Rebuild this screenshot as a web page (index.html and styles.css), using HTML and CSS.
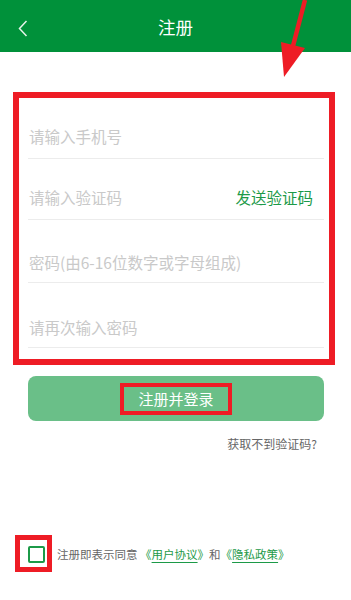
FILE: index.html
```html
<!DOCTYPE html>
<html lang="zh-CN">
<head>
<meta charset="utf-8">
<title>注册</title>
<link rel="stylesheet" href="styles.css">
</head>
<body>
<div class="page">
  <header class="topbar">
    <svg class="back" width="10" height="17" viewBox="0 0 10 17"><path d="M8.5 1 L1.5 8.5 L8.5 16" fill="none" stroke="#e6f4ea" stroke-width="1.5"/></svg>
    <h1 class="title">注册</h1>
  </header>

  <svg class="arrow" width="40" height="80" viewBox="270 0 40 80">
    <line x1="305" y1="0" x2="293" y2="46" stroke="#ee1c25" stroke-width="4.5"/>
    <polygon points="281,42 305,48 284,77" fill="#ee1c25"/>
  </svg>

  <main class="content">
    <div class="form-box">
      <div class="row row-1"><span class="ph">请输入手机号</span></div>
      <div class="row row-2"><span class="ph">请输入验证码</span><span class="send">发送验证码</span></div>
      <div class="row row-3"><span class="ph">密码(由6-16位数字或字母组成)</span></div>
      <div class="row row-4"><span class="ph">请再次输入密码</span></div>
    </div>

    <div class="submit"><span class="submit-label">注册并登录</span></div>

    <div class="help">获取不到验证码?</div>
  </main>

  <footer class="agree">
    <span class="check-mark"><span class="check"></span></span>
    <span class="agree-text">注册即表示同意 <span class="link">《<u>用户协议</u>》</span>和<span class="link">《<u>隐私政策</u>》</span></span>
  </footer>
</div>
</body>
</html>
```

FILE: styles.css
```css
* { box-sizing: border-box; }
html, body { margin: 0; padding: 0; background: #ffffff; }
body {
  font-family: "Noto Sans CJK SC", "Noto Sans", sans-serif;
  width: 351px;
  height: 600px;
  overflow: hidden;
}
.page { position: relative; width: 351px; height: 600px; }

.topbar {
  height: 52px;
  background: #00913a;
  display: flex;
  align-items: center;
  justify-content: center;
  position: relative;
}
.back { position: absolute; left: 18px; top: 20px; }
.title {
  margin: 0;
  font-size: 17.5px;
  font-weight: normal;
  color: #ffffff;
  line-height: 20px;
  padding-top: 2px;
}

.arrow { position: absolute; left: 270px; top: 0; }

.content { padding: 40px 16px 0 13px; }

.form-box {
  border: 6px solid #ee1c25;
  padding: 0 5px 11px 9px;
}
.row {
  border-bottom: 1px solid #ececec;
  display: flex;
  align-items: flex-end;
  justify-content: space-between;
  padding: 0 11px 14px 1px;
  font-size: 15.5px;
  line-height: 16px;
}
.row-1 { height: 61px; }
.row-2 { height: 61px; }
.row-3 { height: 63px; padding-bottom: 12px; }
.row-4 { height: 65px; padding-bottom: 12px; }
.ph { color: #c9c9c9; }
.send { color: #1c9a48; }

.submit {
  margin: 11px 11px 0 15px;
  height: 45px;
  border-radius: 8px;
  background: #6abf88;
  display: flex;
  align-items: center;
  justify-content: center;
}
.submit-label {
  border: 4px solid #ee1c25;
  padding: 4px 14px;
  color: #ffffff;
  font-size: 15px;
  line-height: 16px;
}

.help {
  margin: 15px 18px 0 0;
  text-align: right;
  font-size: 12px;
  line-height: 16px;
  color: #666666;
}

.agree {
  position: absolute;
  left: 15px;
  top: 535px;
  display: flex;
  align-items: center;
  gap: 5px;
}
.check-mark {
  width: 37px;
  height: 37px;
  border: 5px solid #ee1c25;
  padding: 6px 2px 4px 8px;
  display: flex;
}
.check {
  width: 17px;
  height: 17px;
  border: 2px solid #1c9a48;
  border-radius: 2px;
}
.agree-text {
  font-size: 11.5px;
  color: #666666;
  line-height: 16px;
}
.link { color: #1c9a48; }
.link u { text-decoration-color: #1c9a48; text-underline-offset: 3px; }
```
